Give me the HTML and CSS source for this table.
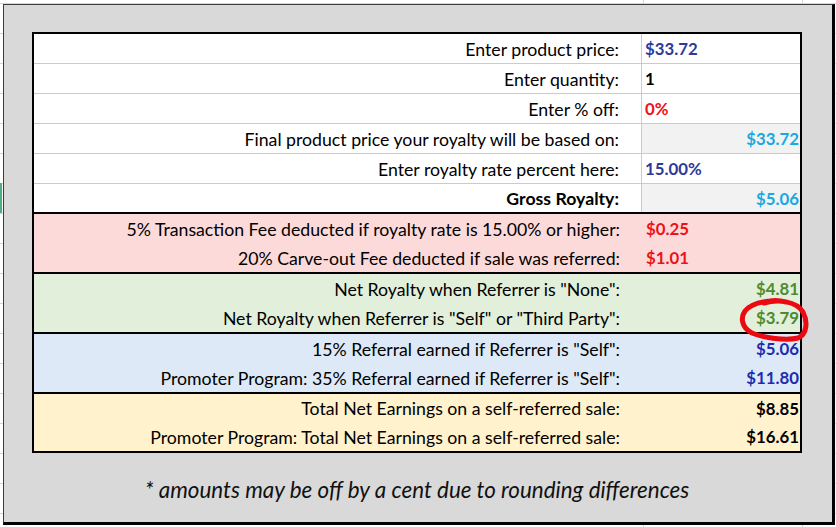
FILE: index.html
```html
<!DOCTYPE html>
<html>
<head>
<meta charset="utf-8">
<link rel="stylesheet" href="styles.css">
</head>
<body>
<div class="panel">
  <div class="sheet">
    <section class="grp grp-white">
      <div class="row"><div class="lbl">Enter product price:</div><div class="val c-navy">$33.72</div></div>
      <div class="row"><div class="lbl">Enter quantity:</div><div class="val c-black">1</div></div>
      <div class="row"><div class="lbl">Enter % off:</div><div class="val c-red">0%</div></div>
      <div class="row"><div class="lbl">Final product price your royalty will be based on:</div><div class="val calc c-sky">$33.72</div></div>
      <div class="row"><div class="lbl">Enter royalty rate percent here:</div><div class="val c-navy">15.00%</div></div>
      <div class="row last"><div class="lbl bold">Gross Royalty:</div><div class="val calc c-sky">$5.06</div></div>
    </section>
    <section class="grp grp-pink">
      <div class="row"><div class="lbl">5% Transaction Fee deducted if royalty rate is 15.00% or higher:</div><div class="val c-red">$0.25</div></div>
      <div class="row"><div class="lbl">20% Carve-out Fee deducted if sale was referred:</div><div class="val c-red">$1.01</div></div>
    </section>
    <section class="grp grp-green">
      <div class="row"><div class="lbl">Net Royalty when Referrer is "None":</div><div class="val right c-green">$4.81</div></div>
      <div class="row"><div class="lbl">Net Royalty when Referrer is "Self" or "Third Party":</div><div class="val right c-green">$3.79</div></div>
    </section>
    <section class="grp grp-blue">
      <div class="row"><div class="lbl">15% Referral earned if Referrer is "Self":</div><div class="val right c-blue">$5.06</div></div>
      <div class="row"><div class="lbl">Promoter Program: 35% Referral earned if Referrer is "Self":</div><div class="val right c-blue">$11.80</div></div>
    </section>
    <section class="grp grp-yellow">
      <div class="row"><div class="lbl">Total Net Earnings on a self-referred sale:</div><div class="val right c-black">$8.85</div></div>
      <div class="row"><div class="lbl">Promoter Program: Total Net Earnings on a self-referred sale:</div><div class="val right c-black">$16.61</div></div>
    </section>
  </div>
  <p class="note">* amounts may be off by a cent due to rounding differences</p>
</div>
<div class="row-marker"></div>
<svg class="circle" width="76" height="50" viewBox="0 0 76 50">
  <path d="M28 7 C42 3, 60 5, 67 16 C72 26, 71 38, 62 42 C50 45, 28 42, 16 37 C6 32, 4 22, 9 15 C14 9, 24 6, 34 5 C40 4, 46 5, 50 6" fill="none" stroke="#ec0a12" stroke-width="5" stroke-linecap="round"/>
</svg>
</body>
</html>
```

FILE: styles.css
```css
html, body {
  margin: 0;
  padding: 0;
}
body {
  width: 836px;
  height: 527px;
  overflow: hidden;
  font-family: "Lato", "Liberation Sans", sans-serif;
  background-color: #ffffff;
  background-image:
    linear-gradient(to right, transparent 643px, #d3d6db 643px, #d3d6db 644px, transparent 644px, transparent 802px, #d3d6db 802px, #d3d6db 803px, transparent 803px),
    repeating-linear-gradient(to bottom, transparent 0, transparent 3px, #d3d6db 3px, #d3d6db 4px, transparent 4px, transparent 30px);
  padding-top: 4px;
  padding-left: 3px;
  box-sizing: border-box;
}
.panel {
  position: relative;
  box-sizing: border-box;
  width: 832px;
  height: 521px;
  background: #d9d9d9;
  border-left: 1px solid #3c3c3c;
  border-top: 1px solid #3c3c3c;
  border-right: 3px solid #000;
  border-bottom: 3px solid #000;
  padding: 27px 0 0 28px;
}
.sheet {
  width: 770px;
  box-sizing: border-box;
  border: 2px solid #000;
  background: #fff;
}
.grp {
  display: flex;
  flex-direction: column;
}
.grp + .grp {
  border-top: 2px solid #000;
}
.grp-white { height: 178px; }
.grp-pink { height: 58px; background: #fcdada; }
.grp-green { height: 58px; background: #e2efda; }
.grp-blue { height: 58px; background: #dde9f6; }
.grp-yellow { height: 57px; background: #fff2cc; }

.row {
  flex: 1;
  display: flex;
  line-height: 1;
  color: #000;
}
.grp-white .row {
  flex: 0 0 30px;
  box-sizing: border-box;
  border-bottom: 1px solid #c8ccd2;
}
.grp-white .row.last {
  flex: 1;
  border-bottom: none;
}
.lbl {
  width: 608px;
  box-sizing: border-box;
  padding-right: 22px;
  font-size: 17.7px;
  text-align: right;
  display: flex;
  align-items: center;
  justify-content: flex-end;
  padding-top: 2px;
  white-space: nowrap;
}
.grp-white .lbl {
  border-right: 1px solid #c8ccd2;
}
.grp .lbl { margin-right: 1px; }
.grp-white .lbl { margin-right: 0; }
.bold { font-weight: 700; }
.val {
  flex: 1;
  display: flex;
  align-items: center;
  padding: 2px 0 0 3px;
  font-size: 16.8px;
  font-weight: 700;
  white-space: nowrap;
}
.val.calc, .val.right {
  justify-content: flex-end;
  padding-right: 1px;
}
.val.calc {
  background: #f2f2f2;
}
.c-navy { color: #2d3a9c; }
.c-black { color: #000; }
.c-red { color: #ee1118; }
.c-sky { color: #17a9e1; }
.c-green { color: #4f8a2e; }
.c-blue { color: #1c2cb0; }

.note {
  margin: 24px 0 0 0;
  width: 770px;
  text-align: center;
  font-style: italic;
  font-size: 22.4px;
  line-height: 1.2;
  color: #111;
}
.row-marker {
  position: absolute;
  left: 0;
  top: 183px;
  width: 2px;
  height: 30px;
  background: #4caf80;
}
.circle {
  position: absolute;
  left: 736px;
  top: 296px;
}
```
